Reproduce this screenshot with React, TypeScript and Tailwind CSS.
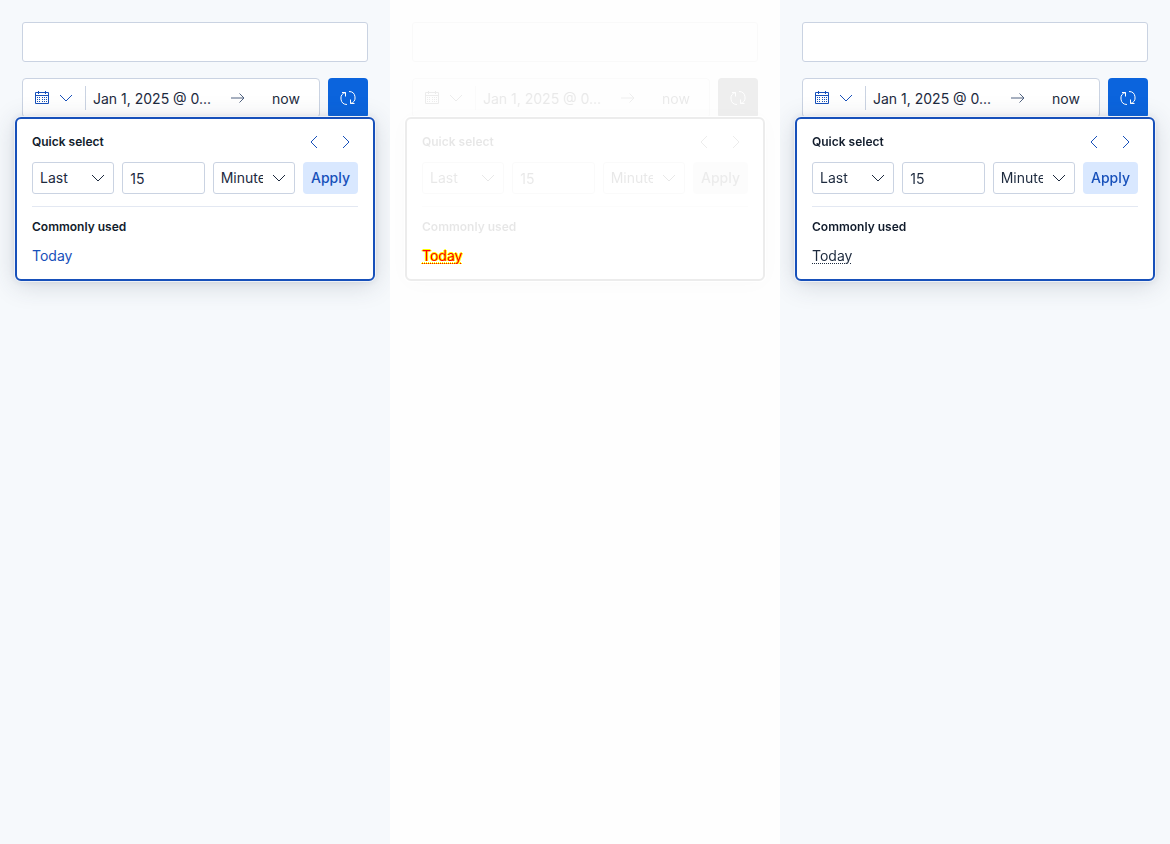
import type { ReactNode } from 'react';
import clsx from 'clsx';

type Variant = 'baseline' | 'diff' | 'current';

const PANELS: Variant[] = ['baseline', 'diff', 'current'];

const UNDERLINE = 'underline decoration-dotted decoration-1 underline-offset-2';

const TODAY_STYLES: Record<Variant, string> = {
  baseline: 'text-[#1750ba]',
  diff: clsx(UNDERLINE, 'text-[#f00] [text-shadow:-1px_0_#ff0,1px_0_#ff0,0_-1px_#ff0]'),
  current: clsx(UNDERLINE, 'text-[#1d2a3e]'),
};

function Icon({ children, className }: { children: ReactNode; className?: string }) {
  return (
    <svg
      className={clsx('block h-4 w-4 shrink-0', className)}
      viewBox="0 0 16 16"
      fill="none"
      stroke="currentColor"
      aria-hidden="true"
    >
      {children}
    </svg>
  );
}

function CalendarIcon() {
  return (
    <Icon>
      <path d="M1.5 2.5h13v11h-13zM1.5 5.5h13M4.5 1v3M11.5 1v3" />
      <path
        d="M3 7.5h10M3 9.5h10M3 11.5h10"
        strokeDasharray="1 1.25"
        shapeRendering="crispEdges"
      />
    </Icon>
  );
}

function ChevronDown({ className }: { className?: string }) {
  return (
    <Icon className={className}>
      <path d="M2 5l6 6 6-6" />
    </Icon>
  );
}

function ArrowRight() {
  return (
    <Icon className="text-[#516381]">
      <path d="M1 8h13M9.5 3.5L14 8l-4.5 4.5" />
    </Icon>
  );
}

function RefreshIcon() {
  return (
    <Icon>
      <path d="M2 2.5h3.500v4M5.500 2.500A6.100 6.100 0 0 0 7 14.500" />
      <path d="M14.500 13.500h-4v-4M9 1.500A6.100 6.100 0 0 1 10.500 13.500" />
    </Icon>
  );
}

function SelectBox({ label, options }: { label: string; options: string[] }) {
  return (
    <div className="relative min-w-0">
      <select
        aria-label={label}
        className="block h-8 w-full appearance-none rounded-[3px] border border-[#cad3e2] bg-white pr-[31px] pl-[7px] text-sm text-[#1d2a3e]"
      >
        {options.map((option) => (
          <option key={option}>{option}</option>
        ))}
      </select>
      <ChevronDown className="pointer-events-none absolute top-2 right-2 text-[#1d2a3e]" />
    </div>
  );
}

function QuickSelectPopover({ variant, faded }: { variant: Variant; faded: string }) {
  return (
    <div
      className={clsx(
        'absolute top-[39px] -right-[7px] -left-[7px] rounded-md border-2 bg-white px-[15px] pt-[11px] pb-[13px]',
        variant === 'diff'
          ? 'border-[#ececec] shadow-[0_0_0_1px_#fff,0_2px_24px_rgba(0,0,0,0.02)]'
          : 'border-[#1750ba] shadow-[0_0_0_1px_#eef1f7,0_0_6px_rgba(43,57,79,0.12),0_4px_26px_rgba(43,57,79,0.18)]'
      )}
    >
      <div className={faded}>
        <div className="flex h-6 items-center justify-between">
          <h2 className="text-xs font-semibold text-[#111c2c]">Quick select</h2>
          <div className="flex gap-2 text-[#1750ba]">
            <button type="button" aria-label="Previous time window" className="flex h-6 w-6 items-center justify-center">
              <Icon>
                <path d="M11 2L5 8l6 6" />
              </Icon>
            </button>
            <button type="button" aria-label="Next time window" className="flex h-6 w-6 items-center justify-center">
              <Icon>
                <path d="M5 2l6 6-6 6" />
              </Icon>
            </button>
          </div>
        </div>

        <div className="mt-2 grid grid-cols-[1fr_1fr_1fr_55px] gap-2">
          <SelectBox label="Time tense" options={['Last', 'Next']} />
          <input
            type="text"
            inputMode="numeric"
            aria-label="Time value"
            defaultValue="15"
            className="h-8 w-full min-w-0 rounded-[3px] border border-[#cad3e2] bg-white px-[7px] pt-px text-sm text-[#1d2a3e]"
          />
          <SelectBox label="Time unit" options={['Minutes', 'Hours', 'Days']} />
          <button type="button" className="h-8 rounded bg-[#d9e8ff] text-sm font-[450] text-[#1750ba]">
            Apply
          </button>
        </div>

        <hr className="mt-3 border-[#e3e8f2]" />
        <h2 className="mt-3 text-xs font-semibold text-[#111c2c]">Commonly used</h2>
      </div>

      <button type="button" className={clsx('mt-[11px] block text-sm', TODAY_STYLES[variant])}>
        Today
      </button>
    </div>
  );
}

function DatePickerPanel({ variant }: { variant: Variant }) {
  const faded = variant === 'diff' ? 'grayscale opacity-10' : '';

  return (
    <section
      className={clsx(
        'min-w-0 overflow-hidden px-[22px] pt-[22px]',
        variant === 'diff' ? 'bg-[#fefefe]' : 'bg-[#f6f9fc]'
      )}
    >
      <input
        type="text"
        aria-label="Search"
        className={clsx('block h-10 w-full rounded-[3px] border border-[#cad3e2] bg-white px-3 text-sm', faded)}
      />

      <div className="relative mt-4">
        <div className={clsx('flex gap-2', faded)}>
          <div className="flex h-10 min-w-0 flex-1 items-center rounded border border-[#cad3e2] bg-white text-sm text-[#1d2a3e]">
            <button
              type="button"
              aria-label="Date quick select"
              className="flex h-6 shrink-0 items-center gap-2 border-r border-[#cad3e2] px-[11px] text-[#1750ba]"
            >
              <CalendarIcon />
              <ChevronDown />
            </button>
            <button type="button" className="min-w-0 flex-1 truncate px-[7px] pt-0.5 text-left">
              Jan 1, 2025 @ 0...
            </button>
            <span className="flex w-[30px] shrink-0 justify-center">
              <ArrowRight />
            </span>
            <button type="button" className="w-[66px] shrink-0 pt-0.5 text-center">
              now
            </button>
          </div>
          <button
            type="button"
            aria-label="Refresh"
            className="flex h-10 w-10 shrink-0 items-center justify-center rounded bg-[#0b64dd] text-white"
          >
            <RefreshIcon />
          </button>
        </div>

        <QuickSelectPopover variant={variant} faded={faded} />
      </div>
    </section>
  );
}

export default function App() {
  return (
    <main className="grid min-h-screen grid-cols-3 font-[Inter,sans-serif]">
      {PANELS.map((variant) => (
        <DatePickerPanel key={variant} variant={variant} />
      ))}
    </main>
  );
}
